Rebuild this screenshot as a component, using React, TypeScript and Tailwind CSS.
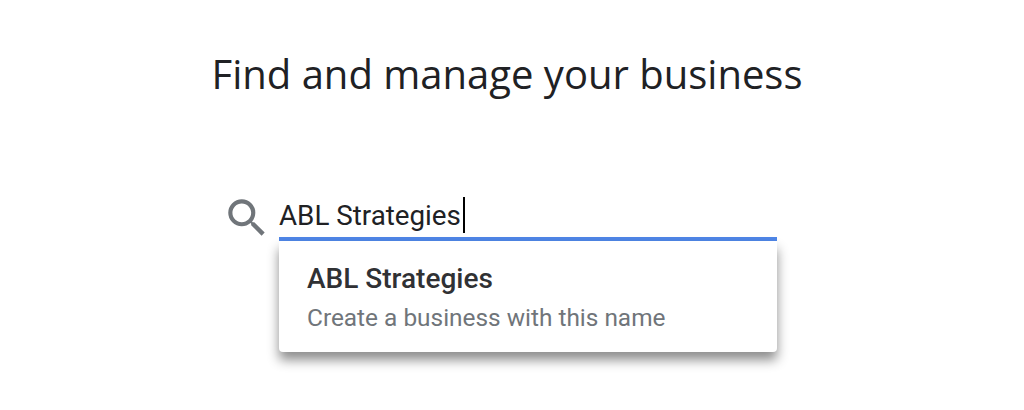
import { useState } from "react";

function SearchIcon() {
  return (
    <svg width="50" height="50" viewBox="0 0 24 24" fill="#70757a">
      <path d="M15.5 14h-.79l-.28-.27A6.47 6.47 0 0 0 16 9.5 6.5 6.5 0 1 0 9.5 16c1.61 0 3.09-.59 4.23-1.57l.27.28v.79l5 4.99L20.49 19l-4.99-5zm-6 0C7.01 14 5 11.99 5 9.5S7.01 5 9.5 5 14 7.01 14 9.5 11.99 14 9.5 14z" />
    </svg>
  );
}

export default function App() {
  const [name] = useState("ABL Strategies");
  return (
    <div className="w-[1024px] h-[410px] bg-white overflow-hidden flex flex-col items-center font-['Roboto',sans-serif]">
      <h1 className="mt-[49px] ml-[-10px] text-[40px] leading-[50px] font-normal text-[#202124] font-['Open_Sans',sans-serif]">
        Find and manage your business
      </h1>
      <div className="mt-[94px] ml-[222px] self-start flex items-start gap-[7px]">
        <SearchIcon />
        <div className="w-[498px]">
          <div className="h-[48px] border-b-[4px] border-[#4f86e7] flex items-center pt-[2px] text-[27.75px] text-[#202124]">
            {name}
            <span className="ml-[2px] w-[2px] h-[36px] -translate-y-[1px] bg-black" />
          </div>
          <div className="h-[111px] bg-white rounded-b-[4px] shadow-[0_8px_12px_rgba(0,0,0,0.45)] pl-[28px] pr-[29px] pt-[20px]">
            <div className="text-[28px] leading-[36px] font-medium text-[#303134]">ABL Strategies</div>
            <div className="text-[24.4px] leading-[42px] text-[#70757a]">Create a business with this name</div>
          </div>
        </div>
      </div>
    </div>
  );
}
